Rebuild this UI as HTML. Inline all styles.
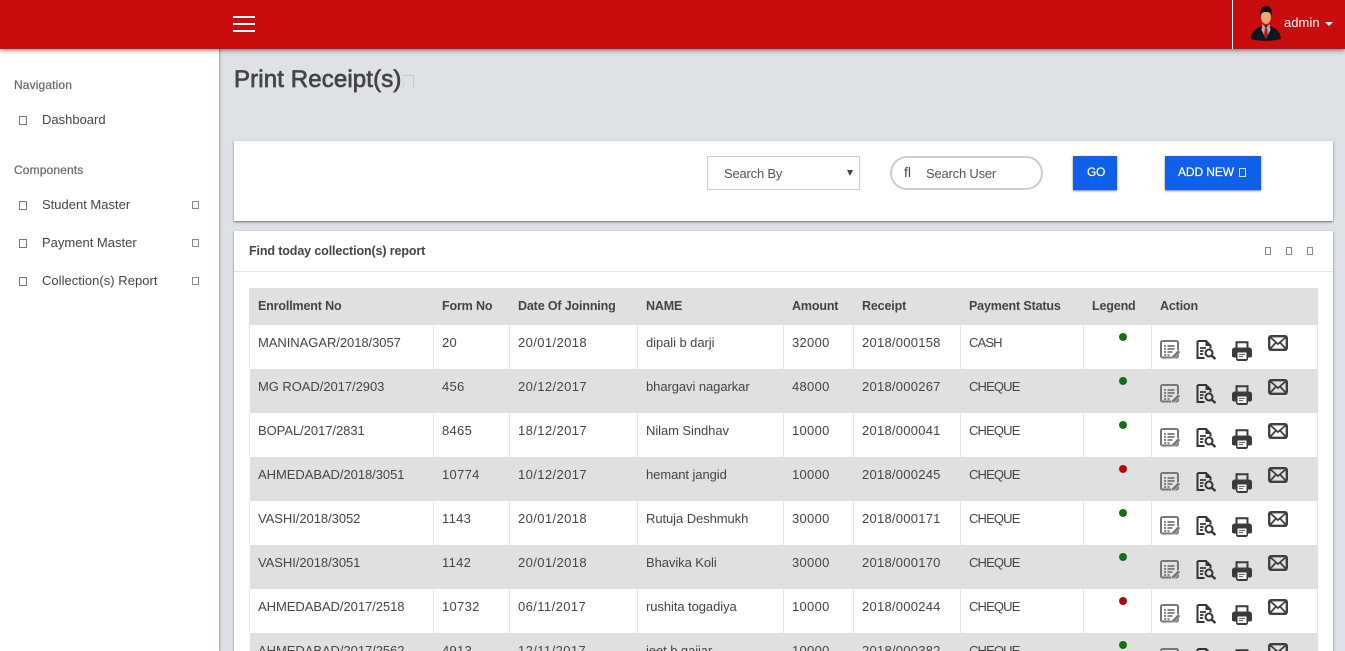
<!DOCTYPE html>
<html><head><meta charset="utf-8"><style>
*{box-sizing:border-box}
html,body{margin:0;padding:0;width:1345px;height:651px;overflow:hidden;background:#dee2e6}
body{font-family:"Liberation Sans",sans-serif;font-size:13px;color:#444;position:relative}
div,span{position:absolute;white-space:nowrap}
.top{left:0;top:0;width:1345px;height:49px;background:#c90c0d;box-shadow:0 1px 5px rgba(0,0,0,.55);z-index:5}
.bar{left:233px;width:22px;height:2px;background:#fff}
.side{left:0;top:49px;width:219px;height:602px;background:#fff;box-shadow:1px 0 2px rgba(0,0,0,.3);z-index:2}
.tf{width:8px;height:9px;border:1px solid #777}
.tr{width:7px;height:8px;border:1px solid #888}
.sl{left:14px;font-size:12px;color:#666;letter-spacing:.13px;-webkit-text-stroke:.2px #666}
.si{left:42px;font-size:13px;color:#444;letter-spacing:0}
.card{left:234px;width:1099px;background:#fff;box-shadow:0 1px 2px rgba(0,0,0,.55)}
.r{left:250px;width:1068px;height:44px;background:#fff}
.g{background:#e0e0e0}
.r span{top:10px;line-height:16px;color:#444}
.r span:nth-of-type(1){letter-spacing:-.05px}
.r span:nth-of-type(2){letter-spacing:.3px}
.r span:nth-of-type(3){letter-spacing:.4px}
.r span:nth-of-type(4){letter-spacing:-.07px}
.r span:nth-of-type(5){letter-spacing:.3px}
.r span:nth-of-type(6){letter-spacing:.25px}
.r span:nth-of-type(7){letter-spacing:-.85px}
.r i{position:absolute;top:0;bottom:0;width:1px;background:#e4e4e4}
.g i{display:none}
.d{width:8px;height:8px;border-radius:50%;left:869px;top:8px;background:#176d17}
.d.x{background:#b00b0b}
.h{top:298px;font-weight:bold;font-size:12.5px;line-height:16px;color:#444;letter-spacing:-.15px;z-index:1}
.ic{position:absolute;left:0;top:0;filter:blur(.35px)}
</style></head><body>
<svg width="0" height="0" style="position:absolute"><defs>
<symbol id="a" viewBox="0 0 20 20"><rect x="1" y="1" width="17" height="16.500" rx="1.500" fill="none" stroke="#777" stroke-width="2"/><path d="M4 6h2M7.500 6h7M4 9h2M7.500 9h7M4 12h2M7.500 12h5M4 15h2M7.500 15h2" stroke="#777" stroke-width="1.800"/><path d="M11 19.500l1-3.500 6-6 2.500 2-6 6z" fill="#777" stroke="#fff" stroke-width=".5"/></symbol>
<symbol id="b" viewBox="0 0 20 20"><path d="M1.500 1h8.500l4.500 4.500v3M1.500 1v17h7" fill="none" stroke="#333" stroke-width="2"/><path d="M9.500 1v5h5z" fill="#333"/><path d="M4 8h6M4 11h3.500M4 14h3" stroke="#333" stroke-width="1.800"/><circle cx="13" cy="13" r="3.500" fill="none" stroke="#333" stroke-width="2"/><path d="M15.500 15.500l4 3.500" stroke="#333" stroke-width="2.400"/></symbol>
<symbol id="c" viewBox="0 0 20 20"><path d="M4.500 7V1.200h11V7" fill="none" stroke="#3a3a3a" stroke-width="2"/><path d="M3 6.500h14q3 0 3 3v5q0 2-2 2h-2v1q0 2.500-2.500 2.500h-7q-2.500 0-2.500-2.500v-1H2q-2 0-2-2v-5q0-3 3-3z" fill="#3a3a3a"/><rect x="5.500" y="11.500" width="9" height="6.500" fill="#f4f4f4"/><path d="M7 13.500h6M7 15.500h4" stroke="#666"/></symbol>
<symbol id="e" viewBox="0 0 20 16"><rect x="1.200" y="1.200" width="17.600" height="13.600" rx="2" fill="none" stroke="#3f3f3f" stroke-width="2.400"/><path d="M2 2l8 7 8-7M2 14l6-6.500M18 14l-6-6.500" fill="none" stroke="#3f3f3f" stroke-width="1.800"/></symbol>
</defs></svg>

<div class="top">
<div class="bar" style="top:16px"></div><div class="bar" style="top:23px"></div><div class="bar" style="top:30px"></div>
<div style="left:1232px;top:0;width:1px;height:49px;background:#fff"></div>
<svg style="position:absolute;left:1250px;top:5px" width="32" height="37" viewBox="0 0 32 37"><path d="M1 34c1-9 5-10 11-13h8c6 3 10 4 11 13q-15 4-30 0z" fill="#10161c"/><path d="M12.500 19l3.500 4 3.500-4 1 6-4.500 9-4.500-9z" fill="#aab0b4"/><path d="M15 23h2l1 7-2 4-2-4z" fill="#c01515"/><ellipse cx="16" cy="12" rx="5" ry="7" fill="#f0a878"/><path d="M10.500 12c-1.500-9 3-11 6-11s6.500 2 5 11c-.5-4-2-5-5.500-5s-5 1-5.500 5z" fill="#111"/></svg>
<span style="left:1284px;top:15px;color:#fff;font-size:13px;line-height:16px;letter-spacing:.05px">admin</span>
<div style="left:1325px;top:22px;border:4px solid transparent;border-top-color:#fff;border-bottom:0"></div>
</div>

<div class="side"></div>
<div style="z-index:3;left:0;top:0">
<span class="sl" style="top:78px">Navigation</span>
<div class="tf" style="left:19px;top:116px"></div><span class="si" style="top:112px">Dashboard</span>
<span class="sl" style="top:163px">Components</span>
<div class="tf" style="left:19px;top:201px"></div><span class="si" style="top:197px">Student Master</span><div class="tr" style="left:192px;top:201px"></div>
<div class="tf" style="left:19px;top:239px"></div><span class="si" style="top:235px">Payment Master</span><div class="tr" style="left:192px;top:239px"></div>
<div class="tf" style="left:19px;top:277px"></div><span class="si" style="top:273px;letter-spacing:.03px">Collection(s) Report</span><div class="tr" style="left:192px;top:277px"></div>
</div>

<span style="left:234px;top:65px;font-size:24px;line-height:30px;color:#444;letter-spacing:.13px;-webkit-text-stroke:.7px #444">Print Receipt(s)</span>
<div style="left:403px;top:75px;width:11px;height:12px;border:1px solid #c4c8cc;border-left-color:#d4d8dc;border-bottom:0"></div>

<div class="card" style="top:141px;height:80px"></div>
<div style="left:707px;top:156px;width:153px;height:34px;background:#fff;border:1px solid #ccc"></div>
<span style="left:724px;top:166px;line-height:16px;color:#555;letter-spacing:-.2px">Search By</span>
<div style="left:847px;top:170px;border:3.500px solid transparent;border-top:6px solid #444;border-bottom:0"></div>
<div style="left:890px;top:156px;width:153px;height:34px;background:#fff;border:2px solid #ccc;border-radius:17px"></div>
<span style="left:904px;top:164px;line-height:16px;color:#444;font-size:14px">ﬂ</span>
<span style="left:926px;top:166px;line-height:16px;color:#555;letter-spacing:-.2px">Search User</span>
<div style="left:1073px;top:156px;width:44px;height:34px;background:#0f5fe8;box-shadow:0 1px 2px rgba(0,0,0,.5)"></div>
<span style="left:1087px;top:164px;line-height:16px;color:#fff;font-size:12px;-webkit-text-stroke:.2px #fff;letter-spacing:-.3px">GO</span>
<div style="left:1165px;top:156px;width:96px;height:34px;background:#0f5fe8;box-shadow:0 1px 2px rgba(0,0,0,.5)"></div>
<span style="left:1178px;top:164px;line-height:16px;color:#fff;font-size:12px;letter-spacing:-.1px;-webkit-text-stroke:.2px #fff">ADD NEW</span>
<div style="left:1239px;top:168px;width:7px;height:9px;border:1px solid #dfe9fb"></div>

<div class="card" style="top:231px;height:430px"></div>
<div style="left:234px;top:271px;width:1099px;height:1px;background:#e4e4e4"></div>
<span style="left:249px;top:243px;line-height:16px;font-weight:bold;font-size:12.5px;color:#444;letter-spacing:-.12px">Find today collection(s) report</span>
<div class="tr" style="left:1265px;top:247px;width:6px;height:8px"></div>
<div class="tr" style="left:1286px;top:247px;width:6px;height:8px"></div>
<div class="tr" style="left:1307px;top:247px;width:6px;height:8px"></div>

<div style="left:249px;top:288px;width:1069px;height:37px;background:#e0e0e0"></div>
<span class="h" style="left:258px">Enrollment No</span><span class="h" style="left:442px">Form No</span><span class="h" style="left:518px">Date Of Joinning</span><span class="h" style="left:646px">NAME</span><span class="h" style="left:792px">Amount</span><span class="h" style="left:862px">Receipt</span><span class="h" style="left:969px">Payment Status</span><span class="h" style="left:1092px">Legend</span><span class="h" style="left:1160px">Action</span>

<div class="r" style="top:325px"><i style="left:-1px"></i><i style="left:183px"></i><i style="left:259px"></i><i style="left:387px"></i><i style="left:533px"></i><i style="left:603px"></i><i style="left:710px"></i><i style="left:833px"></i><i style="left:901px"></i><i style="left:1067px"></i><span style="left:8px">MANINAGAR/2018/3057</span><span style="left:192px">20</span><span style="left:268px">20/01/2018</span><span style="left:396px">dipali b darji</span><span style="left:542px">32000</span><span style="left:612px">2018/000158</span><span style="left:719px">CASH</span><div class="d"></div>
<svg class="ic" style="left:910px;top:15px" width="20" height="20"><use href="#a"/></svg><svg class="ic" style="left:946px;top:15px" width="20" height="20"><use href="#b"/></svg><svg class="ic" style="left:982px;top:16px" width="20" height="20"><use href="#c"/></svg><svg class="ic" style="left:1018px;top:10px" width="20" height="16"><use href="#e"/></svg></div>

<div class="r g" style="top:369px"><span style="left:8px">MG ROAD/2017/2903</span><span style="left:192px">456</span><span style="left:268px">20/12/2017</span><span style="left:396px">bhargavi nagarkar</span><span style="left:542px">48000</span><span style="left:612px">2018/000267</span><span style="left:719px">CHEQUE</span><div class="d"></div>
<svg class="ic" style="left:910px;top:15px" width="20" height="20"><use href="#a"/></svg><svg class="ic" style="left:946px;top:15px" width="20" height="20"><use href="#b"/></svg><svg class="ic" style="left:982px;top:16px" width="20" height="20"><use href="#c"/></svg><svg class="ic" style="left:1018px;top:10px" width="20" height="16"><use href="#e"/></svg></div>

<div class="r" style="top:413px"><i style="left:-1px"></i><i style="left:183px"></i><i style="left:259px"></i><i style="left:387px"></i><i style="left:533px"></i><i style="left:603px"></i><i style="left:710px"></i><i style="left:833px"></i><i style="left:901px"></i><i style="left:1067px"></i><span style="left:8px">BOPAL/2017/2831</span><span style="left:192px">8465</span><span style="left:268px">18/12/2017</span><span style="left:396px">Nilam Sindhav</span><span style="left:542px">10000</span><span style="left:612px">2018/000041</span><span style="left:719px">CHEQUE</span><div class="d"></div>
<svg class="ic" style="left:910px;top:15px" width="20" height="20"><use href="#a"/></svg><svg class="ic" style="left:946px;top:15px" width="20" height="20"><use href="#b"/></svg><svg class="ic" style="left:982px;top:16px" width="20" height="20"><use href="#c"/></svg><svg class="ic" style="left:1018px;top:10px" width="20" height="16"><use href="#e"/></svg></div>

<div class="r g" style="top:457px"><span style="left:8px">AHMEDABAD/2018/3051</span><span style="left:192px">10774</span><span style="left:268px">10/12/2017</span><span style="left:396px">hemant jangid</span><span style="left:542px">10000</span><span style="left:612px">2018/000245</span><span style="left:719px">CHEQUE</span><div class="d x"></div>
<svg class="ic" style="left:910px;top:15px" width="20" height="20"><use href="#a"/></svg><svg class="ic" style="left:946px;top:15px" width="20" height="20"><use href="#b"/></svg><svg class="ic" style="left:982px;top:16px" width="20" height="20"><use href="#c"/></svg><svg class="ic" style="left:1018px;top:10px" width="20" height="16"><use href="#e"/></svg></div>

<div class="r" style="top:501px"><i style="left:-1px"></i><i style="left:183px"></i><i style="left:259px"></i><i style="left:387px"></i><i style="left:533px"></i><i style="left:603px"></i><i style="left:710px"></i><i style="left:833px"></i><i style="left:901px"></i><i style="left:1067px"></i><span style="left:8px">VASHI/2018/3052</span><span style="left:192px">1143</span><span style="left:268px">20/01/2018</span><span style="left:396px">Rutuja Deshmukh</span><span style="left:542px">30000</span><span style="left:612px">2018/000171</span><span style="left:719px">CHEQUE</span><div class="d"></div>
<svg class="ic" style="left:910px;top:15px" width="20" height="20"><use href="#a"/></svg><svg class="ic" style="left:946px;top:15px" width="20" height="20"><use href="#b"/></svg><svg class="ic" style="left:982px;top:16px" width="20" height="20"><use href="#c"/></svg><svg class="ic" style="left:1018px;top:10px" width="20" height="16"><use href="#e"/></svg></div>

<div class="r g" style="top:545px"><span style="left:8px">VASHI/2018/3051</span><span style="left:192px">1142</span><span style="left:268px">20/01/2018</span><span style="left:396px">Bhavika Koli</span><span style="left:542px">30000</span><span style="left:612px">2018/000170</span><span style="left:719px">CHEQUE</span><div class="d"></div>
<svg class="ic" style="left:910px;top:15px" width="20" height="20"><use href="#a"/></svg><svg class="ic" style="left:946px;top:15px" width="20" height="20"><use href="#b"/></svg><svg class="ic" style="left:982px;top:16px" width="20" height="20"><use href="#c"/></svg><svg class="ic" style="left:1018px;top:10px" width="20" height="16"><use href="#e"/></svg></div>

<div class="r" style="top:589px"><i style="left:-1px"></i><i style="left:183px"></i><i style="left:259px"></i><i style="left:387px"></i><i style="left:533px"></i><i style="left:603px"></i><i style="left:710px"></i><i style="left:833px"></i><i style="left:901px"></i><i style="left:1067px"></i><span style="left:8px">AHMEDABAD/2017/2518</span><span style="left:192px">10732</span><span style="left:268px">06/11/2017</span><span style="left:396px">rushita togadiya</span><span style="left:542px">10000</span><span style="left:612px">2018/000244</span><span style="left:719px">CHEQUE</span><div class="d x"></div>
<svg class="ic" style="left:910px;top:15px" width="20" height="20"><use href="#a"/></svg><svg class="ic" style="left:946px;top:15px" width="20" height="20"><use href="#b"/></svg><svg class="ic" style="left:982px;top:16px" width="20" height="20"><use href="#c"/></svg><svg class="ic" style="left:1018px;top:10px" width="20" height="16"><use href="#e"/></svg></div>

<div class="r g" style="top:633px"><span style="left:8px">AHMEDABAD/2017/2562</span><span style="left:192px">4913</span><span style="left:268px">12/11/2017</span><span style="left:396px">jeet b gajjar</span><span style="left:542px">10000</span><span style="left:612px">2018/000382</span><span style="left:719px">CHEQUE</span><div class="d"></div>
<svg class="ic" style="left:910px;top:15px" width="20" height="20"><use href="#a"/></svg><svg class="ic" style="left:946px;top:15px" width="20" height="20"><use href="#b"/></svg><svg class="ic" style="left:982px;top:16px" width="20" height="20"><use href="#c"/></svg><svg class="ic" style="left:1018px;top:10px" width="20" height="16"><use href="#e"/></svg></div>
</body></html>
